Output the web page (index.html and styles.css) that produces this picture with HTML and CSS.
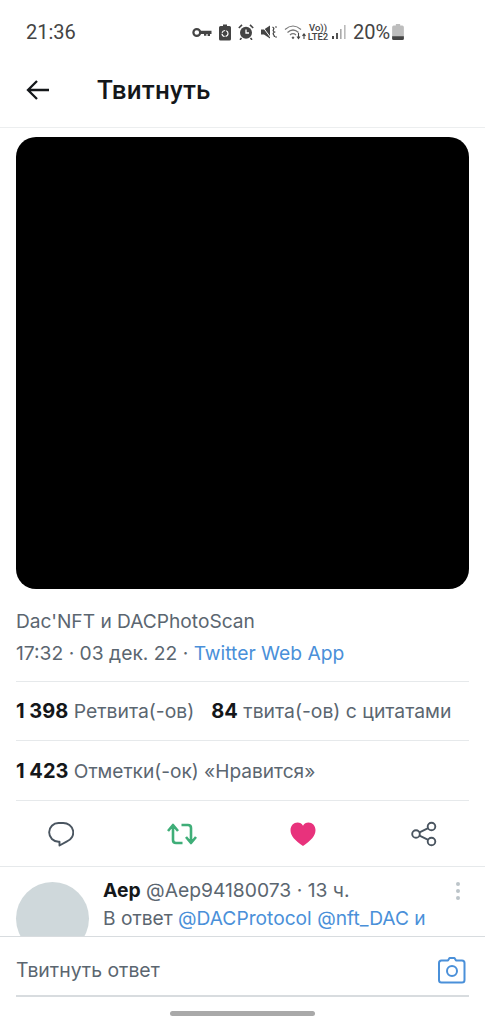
FILE: index.html
```html
<!DOCTYPE html>
<html lang="ru">
<head>
  <meta charset="UTF-8" />
  <meta name="viewport" content="width=device-width, initial-scale=1.0"/>
  <title>Твитнуть</title>
  <link rel="stylesheet" href="styles.css">
</head>
<body>
  <div class="status-bar">
    <span class="clock">21:36</span>
    <div class="status-icons">
      <svg width="20" height="11" viewBox="0 0 20 10"><circle cx="4.8" cy="5" r="3.4" fill="none" stroke="#444" stroke-width="2.200"/><path d="M8 3.200h11.500v3.400h-1.500v2h-2.400v-2h-1.200v1.600h-2.400V6.600H8z" fill="#444"/></svg>
      <svg width="12" height="17" viewBox="0 0 12 16"><path d="M4 0h4v1.500h2.500q1.500 0 1.500 1.500v11.500q0 1.500-1.500 1.500h-9q-1.500 0-1.500-1.500V3q0-1.500 1.500-1.500H4z" fill="#444"/><circle cx="6" cy="9" r="3" fill="none" stroke="#fff" stroke-width="1.200" stroke-dasharray="4 1"/></svg>
      <svg width="16" height="16" viewBox="0 0 16 16"><circle cx="8" cy="8.800" r="6" fill="#444"/><path d="M8 5.500v3.500h3" fill="none" stroke="#fff" stroke-width="1.300"/><path d="M.8 4L4 .9M15.200 4L12 .9M3.500 14l-1.500 1.800M12.500 14l1.500 1.800" stroke="#444" stroke-width="1.600"/></svg>
      <svg width="16" height="16" viewBox="0 0 16 14"><path d="M0 4.500h3L9 .5v13L3 9.500H0z" fill="#444"/><path d="M1 1l9 12" stroke="#fff" stroke-width="1"/><path d="M11.500 2q2 1 1 2.500t1 2.500q-2 1-1 2.500t1 2.500M14.500 1.500l1 1M14.500 11.500l1 1" fill="none" stroke="#444" stroke-width="1.300"/></svg>
      <svg class="wifi" width="24" height="16" viewBox="0 0 24 16"><path d="M1 5.500q8-7 16 0M3.500 8.500q5.500-5 11 0M6 11q3-2.600 6 0" fill="none" stroke="#777" stroke-width="1.200"/><path d="M9 12.200l1.500 1.500L9 15.200 7.500 13.700z" fill="#555"/><path d="M14.500 9v5M13 12.500l1.500 2 1.500-2M20 15v-5M18.500 11.800l1.500-2 1.500 2" fill="none" stroke="#444" stroke-width="1.100"/></svg>
      <span class="volte"><span>Vo))</span><span>LTE2</span></span>
      <svg width="14" height="15" viewBox="0 0 14 15"><rect x="0" y="11" width="2" height="3" fill="#444"/><rect x="4" y="8" width="2" height="6" fill="#555"/><rect x="8" y="4" width="1.600" height="10" fill="#aaa"/><rect x="12" y="0" width="1.600" height="14" fill="#bbb"/></svg>
      <span class="battery-pct">20%</span>
      <svg class="battery" width="12" height="16" viewBox="0 0 11 15"><path d="M3.500 0h4v1.500h2q1.500 0 1.500 1.500v10.500q0 1.500-1.500 1.500h-8Q0 15 0 13.500V3q0-1.500 1.500-1.500h2z" fill="#bdbdbd"/><path d="M0 11.500h11v2q0 1.500-1.500 1.500h-8Q0 15 0 13.500z" fill="#444"/></svg>
    </div>
  </div>

  <header class="top-bar">
    <svg class="back" width="26" height="22" viewBox="0 0 26 22"><path d="M24 11H3M12 2l-9 9 9 9" fill="none" stroke="#14171a" stroke-width="2.300"/></svg>
    <h1>Твитнуть</h1>
  </header>

  <main class="tweet">
    <div class="media"></div>
    <p class="source">Dac'NFT и DACPhotoScan</p>
    <p class="meta">17:32 · 03 дек. 22 · <a href="#">Twitter Web App</a></p>
    <div class="stats stats-first">
      <span><b>1 398</b> Ретвита(-ов)</span>
      <span><b>84</b> твита(-ов) с цитатами</span>
    </div>
    <div class="stats stats-likes">
      <span><b>1 423</b> Отметки(-ок) «Нравится»</span>
    </div>
    <div class="actions">
      <svg width="26" height="26" viewBox="0 0 26 26"><path d="M10.500 2h4.500a10 9.500 0 0 1 4 18.300L11.500 24.500v-3.800h-1A9.300 9.300 0 0 1 10.500 2z" fill="none" stroke="#4a5560" stroke-width="1.900" stroke-linejoin="round"/></svg>
      <svg width="30" height="26" viewBox="0 0 30 26"><path d="M6 5v14q0 3 3 3h6.500M1 10l5-6 5 6M24 21V7q0-3-3-3h-6.500M19 16l5 6 5-6" fill="none" stroke="#3fae78" stroke-width="2.600" stroke-linejoin="round"/></svg>
      <svg class="heart" width="26" height="26" viewBox="0 0 26 26"><path d="M13 25C5 19.500 0.500 15 0.500 9 0.500 4.500 3.800 1.500 7.500 1.500c2.500 0 4.300 1.200 5.500 3.200 1.200-2 3-3.200 5.500-3.200 3.700 0 7 3 7 7.500 0 6-4.500 10.500-12.500 16z" fill="#e8327c"/></svg>
      <svg width="26" height="26" viewBox="0 0 26 26"><circle cx="20.500" cy="5.500" r="3.800" fill="none" stroke="#4a5560" stroke-width="1.900"/><circle cx="20.500" cy="20.500" r="3.800" fill="none" stroke="#4a5560" stroke-width="1.900"/><circle cx="5" cy="13" r="3.800" fill="none" stroke="#4a5560" stroke-width="1.900"/><path d="M8.500 11.300l8.700-4.200M8.500 14.700l8.700 4.200" stroke="#4a5560" stroke-width="1.900"/></svg>
    </div>
    <article class="reply">
      <div class="avatar"></div>
      <div class="reply-body">
        <p class="reply-head"><b>Аер</b> @Aep94180073 · 13 ч.</p>
        <p class="reply-to">В ответ <a href="#">@DACProtocol</a> <a href="#">@nft_DAC</a> <a href="#">и</a></p>
      </div>
      <div class="more"><i></i><i></i><i></i></div>
    </article>
  </main>

  <footer class="composer">
    <div class="composer-row">
      <span>Твитнуть ответ</span>
      <svg class="camera" width="28" height="28" viewBox="0 0 28 28"><path d="M10 4.500l1.500-2.500h5l1.500 2.500h6q2.500 0 2.500 2.500v17q0 2.500-2.500 2.500H3.500Q1 26.500 1 24V7q0-2.500 2.500-2.500z" fill="none" stroke="#4a90d9" stroke-width="2" stroke-linejoin="round"/><circle cx="14" cy="15" r="5" fill="none" stroke="#4a90d9" stroke-width="2"/></svg>
    </div>
    <div class="home-bar"></div>
  </footer>
</body>
</html>
```

FILE: styles.css
```css
:root {
  --text-dark: #14171a;
  --text-grey: #5b6670;
  --link: #4a90d9;
  --line: #e6e9eb;
  --body-font: Inter, Roboto, sans-serif;
}

html, body {
  height: 1024px;
}

body {
  margin: 0;
  overflow: hidden;
  background-color: white;
  color: var(--text-dark);
  font-family: Roboto, 'Noto Sans', sans-serif;
}

p {
  margin: 0;
}

a {
  color: var(--link);
  text-decoration: none;
}

.status-bar {
  height: 62px;
  box-sizing: border-box;
  padding: 20px 0 0 26px;
  display: flex;
  align-items: flex-start;
  color: #444;
}

.clock {
  font-size: 20px;
  line-height: 24px;
  width: 166px;
}

.status-icons {
  display: flex;
  align-items: center;
  gap: 7px;
  height: 24px;
}

.wifi {
  margin-right: -7px;
}

.volte {
  display: flex;
  flex-direction: column;
  align-items: center;
  width: 20px;
  font-size: 9.500px;
  line-height: 9px;
  font-weight: 500;
  margin-right: -3px;
}

.battery-pct {
  font-size: 20px;
  line-height: 24px;
  margin-right: -5px;
}

.top-bar {
  height: 66px;
  box-sizing: border-box;
  border-bottom: 1px solid #eceeef;
  display: flex;
  align-items: center;
  padding: 0 0 9px 25px;
}

.top-bar h1 {
  margin: 0 0 0 46px;
  font-size: 26px;
  font-weight: 500;
  line-height: 32px;
  letter-spacing: 0.2px;
}

.tweet {
  padding: 9px 16px 0;
  font-family: var(--body-font);
}

.media {
  height: 452px;
  background-color: black;
  border-radius: 20px;
}

.source {
  margin-top: 20px;
  font-size: 19.150px;
  line-height: 24px;
  color: var(--text-grey);
}

.meta {
  margin-top: 8px;
  font-size: 19.250px;
  line-height: 24px;
  color: var(--text-grey);
}

.stats {
  display: flex;
  gap: 17px;
  align-items: center;
  border-top: 1px solid var(--line);
  color: var(--text-grey);
}

.stats b {
  color: var(--text-dark);
  font-size: 20px;
  font-weight: 700;
}

.stats-first {
  margin-top: 16px;
  height: 58px;
  font-size: 19.350px;
}

.stats-likes {
  height: 58px;
  padding-top: 1px;
  font-size: 19.100px;
  border-bottom: 1px solid var(--line);
}

.actions {
  height: 65px;
  margin: 0 -16px;
  padding: 0 48px;
  display: flex;
  justify-content: space-between;
  align-items: center;
  border-bottom: 1px solid var(--line);
}

.heart {
  margin-right: 2px;
}

.reply {
  height: 69px;
  margin: 0 -16px;
  padding: 15px 16px 0;
  box-sizing: border-box;
  display: flex;
  overflow: hidden;
  position: relative;
}

.avatar {
  width: 73px;
  height: 73px;
  border-radius: 50%;
  background-color: #cfd8db;
  flex-shrink: 0;
}

.reply-body {
  margin: -1px 0 0 14px;
  font-size: 19.200px;
  color: var(--text-grey);
}

.reply-head {
  line-height: 18px;
  font-size: 19.300px;
}

.reply-head b {
  color: var(--text-dark);
}

.reply-to {
  margin-top: 7px;
  line-height: 24px;
}

.more {
  position: absolute;
  top: 15px;
  right: 25px;
  display: flex;
  flex-direction: column;
  gap: 3px;
}

.more i {
  width: 4px;
  height: 4px;
  border-radius: 50%;
  background-color: #bcc4c9;
}

.composer {
  border-top: 1px solid #d8dcdf;
  padding: 0 16px;
  height: 88px;
  box-sizing: border-box;
  font-family: var(--body-font);
}

.composer-row {
  height: 60px;
  box-sizing: border-box;
  padding-top: 8px;
  display: flex;
  justify-content: space-between;
  align-items: center;
  border-bottom: 2px solid #d8dcdf;
  font-size: 19.400px;
  color: var(--text-grey);
}

.camera {
  margin-right: 3px;
}

.home-bar {
  width: 145px;
  height: 5px;
  margin: 14px auto 0;
  background-color: #a9a9a9;
  border-radius: 3px;
}
```
